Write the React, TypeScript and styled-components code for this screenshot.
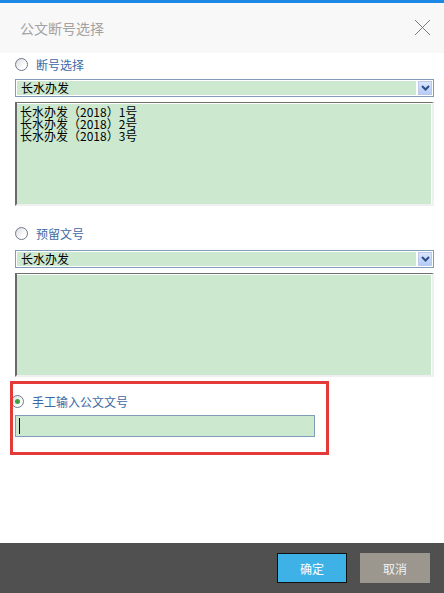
import React, { useState } from 'react';
import styled, { createGlobalStyle } from 'styled-components';

const GlobalStyle = createGlobalStyle`
  html, body {
    margin: 0;
    padding: 0;
    background: #ffffff;
  }
  body {
    font-family: "Noto Sans CJK SC", "Noto Sans", sans-serif;
  }
`;

const numbers = ['长水办发（2018）1号', '长水办发（2018）2号', '长水办发（2018）3号'];

type Mode = 'gap' | 'reserved' | 'manual';

const App: React.FC = () => {
  const [mode, setMode] = useState<Mode>('manual');

  return (
    <>
      <GlobalStyle />
      <Dialog>
        <Header>
          <Title>公文断号选择</Title>
          <CloseButton aria-label="关闭">
            <svg width="17" height="17" viewBox="0 0 17 17">
              <path d="M1 1 L16 16 M16 1 L1 16" stroke="#7a7a7a" strokeWidth="1" fill="none" />
            </svg>
          </CloseButton>
        </Header>

        <Body>
          <RadioRow onClick={() => setMode('gap')}>
            <Radio checked={mode === 'gap'} />
            <RadioLabel>断号选择</RadioLabel>
          </RadioRow>
          <Select>
            <SelectValue>长水办发</SelectValue>
            <SelectArrow />
          </Select>
          <ListBox>
            {numbers.map((n) => (
              <ListItem key={n}>{n}</ListItem>
            ))}
          </ListBox>

          <RadioRow $top={17} onClick={() => setMode('reserved')}>
            <Radio checked={mode === 'reserved'} />
            <RadioLabel>预留文号</RadioLabel>
          </RadioRow>
          <Select $top={7}>
            <SelectValue>长水办发</SelectValue>
            <SelectArrow />
          </Select>
          <ListBox />

          <ManualSection>
            <Highlight />
            <RadioRow $shift={-4} onClick={() => setMode('manual')}>
              <Radio checked={mode === 'manual'} />
              <RadioLabel>手工输入公文文号</RadioLabel>
            </RadioRow>
            <ManualInput>
              <Caret />
            </ManualInput>
          </ManualSection>
        </Body>

        <Footer>
          <PrimaryButton>确定</PrimaryButton>
          <CancelButton>取消</CancelButton>
        </Footer>
      </Dialog>
    </>
  );
};

const Radio: React.FC<{ checked: boolean }> = ({ checked }) => (
  <RadioCircle>{checked && <RadioDot />}</RadioCircle>
);

const SelectArrow: React.FC = () => (
  <ArrowBox>
    <svg width="9" height="6" viewBox="0 0 9 6">
      <path d="M1 1 L4.5 4.5 L8 1" stroke="#2c4f8c" strokeWidth="2" fill="none" />
    </svg>
  </ArrowBox>
);

const Dialog = styled.div`
  width: 444px;
  height: 593px;
  display: flex;
  flex-direction: column;
  border-top: 3px solid #1e88e5;
  box-sizing: border-box;
  background: #ffffff;
`;

const Header = styled.div`
  height: 50px;
  background: #f8f8f8;
  display: flex;
  align-items: center;
  justify-content: space-between;
  padding: 0 13px 0 20px;
  flex-shrink: 0;
`;

const Title = styled.div`
  font-size: 14px;
  color: #a3a3a3;
`;

const CloseButton = styled.button`
  border: none;
  background: none;
  padding: 0;
  width: 17px;
  height: 17px;
  margin-top: -2px;
  cursor: pointer;
  svg { display: block; }
`;

const Body = styled.div`
  flex: 1;
  padding: 1px 10px 0 15px;
  display: flex;
  flex-direction: column;
`;

const RadioRow = styled.label<{ $top?: number; $shift?: number }>`
  display: flex;
  align-items: center;
  height: 20px;
  margin-top: ${(p) => p.$top ?? 0}px;
  margin-left: ${(p) => p.$shift ?? 0}px;
  cursor: pointer;
`;

const RadioCircle = styled.span`
  width: 11px;
  height: 11px;
  border-radius: 50%;
  border: 1px solid #6d7a8c;
  background: linear-gradient(135deg, #dcdcdc 0%, #ffffff 70%);
  display: flex;
  align-items: center;
  justify-content: center;
  flex-shrink: 0;
`;

const RadioDot = styled.span`
  width: 5px;
  height: 5px;
  border-radius: 50%;
  background: #3fa13f;
`;

const RadioLabel = styled.span`
  margin-left: 8px;
  font-size: 12px;
  color: #3c6aa6;
`;

const Select = styled.div<{ $top?: number }>`
  margin-top: ${(p) => p.$top ?? 5}px;
  height: 18px;
  border: 1px solid #7f9db9;
  box-sizing: border-box;
  display: flex;
  align-items: center;
  padding: 1px;
  background: #ffffff;
`;

const SelectValue = styled.div`
  flex: 1;
  height: 14px;
  background: #cce8cf;
  font-size: 12px;
  line-height: 14px;
  color: #000;
  padding-left: 4px;
`;

const ArrowBox = styled.div`
  width: 14px;
  height: 14px;
  margin-left: 2px;
  background: linear-gradient(180deg, #dbe6fb 0%, #b6cbf5 100%);
  border: 1px solid #b9c9ec;
  box-sizing: border-box;
  display: flex;
  align-items: center;
  justify-content: center;
`;

const ListBox = styled.div`
  margin-top: 5px;
  height: 104px;
  box-sizing: border-box;
  border-style: solid;
  border-width: 1px 2px 2px 2px;
  border-color: #707070 #f0f0f0 #f0f0f0 #6a6a6a;
  background: #cce8cf;
  box-shadow: inset 0 1px 0 #ffffff, inset -1px 0 0 #ffffff;
  padding: 3px 3px;
`;

const ListItem = styled.div`
  font-size: 12px;
  line-height: 12px;
  height: 12px;
  color: #000;
  white-space: nowrap;
`;

const ManualSection = styled.div`
  position: relative;
  margin-top: 4px;
  padding-top: 10px;
  height: 64px;
`;

const Highlight = styled.div`
  position: absolute;
  left: -5px;
  top: 0;
  width: 319px;
  height: 74px;
  border: 3px solid #e53a3a;
  box-sizing: border-box;
  pointer-events: none;
  z-index: 1;
`;

const ManualInput = styled.div`
  margin-top: 4px;
  width: 300px;
  height: 22px;
  box-sizing: border-box;
  border: 1px solid #7f9db9;
  background: #cce8cf;
  display: flex;
  align-items: center;
  padding-left: 3px;
`;

const Caret = styled.span`
  width: 1px;
  height: 16px;
  background: #000;
`;

const Footer = styled.div`
  height: 50px;
  flex-shrink: 0;
  background: #505050;
  display: flex;
  align-items: center;
  justify-content: flex-end;
  gap: 13px;
  padding-right: 14px;
`;

const BaseButton = styled.button`
  width: 70px;
  height: 30px;
  font-family: "Noto Sans CJK SC", "Noto Sans", sans-serif;
  font-size: 12px;
  cursor: pointer;
  padding: 0;
  box-sizing: border-box;
`;

const PrimaryButton = styled(BaseButton)`
  background: #3eb2e6;
  border: 1px solid #111;
  color: #ffffff;
`;

const CancelButton = styled(BaseButton)`
  background: #9b978f;
  border: none;
  color: #f2f2f2;
`;

export default App;
